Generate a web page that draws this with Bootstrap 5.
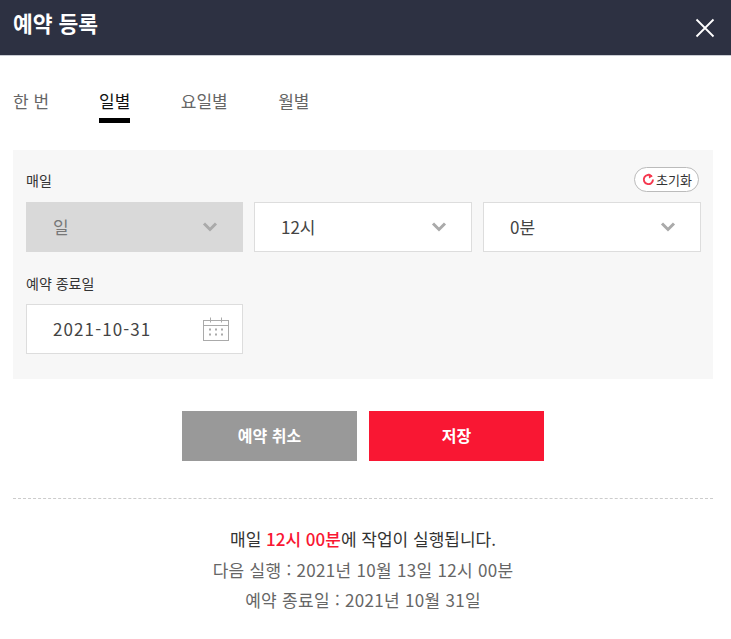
<!DOCTYPE html>
<html lang="ko"><head><meta charset="utf-8">
<link rel="stylesheet" href="https://cdn.jsdelivr.net/npm/bootstrap@5.3.0/dist/css/bootstrap.min.css">
<style>
body{font-family:"Noto Sans CJK KR","Noto Sans",sans-serif;background:#fff;color:#333;overflow:hidden}
.hdr{height:56px;background:#2d3142;border-bottom:1px solid #c9ccd3;padding:0 16px 0 13px}
.hdr-title{font-size:21.5px;font-weight:700;color:#fff;line-height:1;margin:0;position:relative;top:-5px}
.x-btn{background:none;border:0;padding:0;width:20px;height:20px;display:block;position:relative;top:-4px}
.tabs-row{padding:33px 13px 0;height:94px}
.tab-i{font-size:17px;color:#666;line-height:24px;height:34px;padding:0;text-decoration:none;display:block;margin-right:50.5px;border-bottom:4px solid transparent}
.tab-i:first-child{width:35.5px;white-space:nowrap}
.tab-i.on{color:#111;border-bottom:5px solid #000;height:34px}
.panel{margin:0 18px 0 13px;background:#f7f7f7;padding:13px 12px 25px 13px;height:229px}
.lbl{font-size:14px;line-height:20px;color:#333;margin:0}
.lbl1{padding-top:2px}
.top-row{height:39px;padding-top:5px}
.reset{font-size:13px;line-height:1;color:#333;background:#fff;border:1px solid #bbb;border-radius:13px;height:25px;padding:0 6px 0 7px;gap:1px;margin:0 2px 0 0;position:relative;top:-1px}
.sel-row{gap:11px}
.sel{flex:1 1 0;height:50px;background:#fff;border:1px solid #ddd;font-size:17px;color:#444;padding:0 24px 0 26px}
.sel.off{background:#d9d9d9;border-color:#d9d9d9;color:#777;flex:none;width:217px}
.field-w{width:217px;flex:none;padding-right:13px}
.num{letter-spacing:1.1px}
.lbl2{margin:21px 0 11px}
.acts{gap:12px;margin:32px 18px 0 13px}
.act{width:175px;height:50px;border:0;border-radius:0;font-size:16px;font-weight:700;color:#fff;padding:0 0 3px}
.act.gray{background:#999}
.act.red{background:#f91733}
.act.gray:hover{background:#999;color:#fff}
.act.red:hover{background:#f91733;color:#fff}
.dash{margin:37px 18px 0 13px;border-top:1px dashed #ccc}
.info{text-align:center;margin:25px 18px 0 13px;font-size:17px;line-height:30.5px;color:#666}
.info .main{color:#333}
.info .sub{letter-spacing:.3px}
.info b{color:#f91733;font-weight:500}
</style></head><body>
<div class="hdr d-flex align-items-center justify-content-between">
<h1 class="hdr-title">예약 등록</h1>
<button class="x-btn" aria-label="닫기"><svg width="20" height="20" viewBox="0 0 20 20"><path d="M1.5 1.5 18.5 18.5M18.5 1.5 1.5 18.5" stroke="#fff" stroke-width="1.8" fill="none"/></svg></button>
</div>
<div class="tabs-row d-flex align-items-start">
<a class="tab-i" href="#">한 번</a><a class="tab-i on" href="#">일별</a><a class="tab-i" href="#">요일별</a><a class="tab-i" href="#">월별</a>
</div>
<div class="panel">
<div class="top-row d-flex justify-content-between align-items-start">
<p class="lbl lbl1">매일</p>
<button class="reset d-flex align-items-center"><svg width="13" height="13" viewBox="0 0 13 13"><path d="M9.6 3.2A4.6 4.6 0 1 0 11 6.5" stroke="#f5384f" stroke-width="1.9" fill="none"/><path d="M6.6 .3 10.8 3.2 7 5.6Z" fill="#f5384f"/></svg>초기화</button>
</div>
<div class="sel-row d-flex">
<div class="sel off d-flex align-items-center justify-content-between"><span>일</span><svg width="16" height="10" viewBox="0 0 16 10"><path d="M2 1.5 8 7.5 14 1.5" stroke="#aaa" stroke-width="3" fill="none"/></svg></div>
<div class="sel d-flex align-items-center justify-content-between"><span>12시</span><svg width="16" height="10" viewBox="0 0 16 10"><path d="M2 1.5 8 7.5 14 1.5" stroke="#aaa" stroke-width="3" fill="none"/></svg></div>
<div class="sel d-flex align-items-center justify-content-between"><span>0분</span><svg width="16" height="10" viewBox="0 0 16 10"><path d="M2 1.5 8 7.5 14 1.5" stroke="#aaa" stroke-width="3" fill="none"/></svg></div>
</div>
<p class="lbl lbl2">예약 종료일</p>
<div class="sel field-w d-flex align-items-center justify-content-between"><span class="num">2021-10-31</span>
<svg width="26" height="24" viewBox="0 0 26 24" fill="none" stroke="#aaa"><rect x=".5" y="3.5" width="25" height="20"/><path d="M.5 8.5H25.5M7.5 .5V5.5M18.5 .5V5.5"/><path d="M6 12.5h2M12 12.5h2M18 12.5h2M6 17.5h2M12 17.5h2M18 17.5h2" stroke-width="2"/></svg></div>
</div>
<div class="acts d-flex justify-content-center">
<button class="btn act gray">예약 취소</button><button class="btn act red">저장</button>
</div>
<div class="dash"></div>
<div class="info">
<div class="main">매일 <b>12시 00분</b>에 작업이 실행됩니다.</div>
<div class="sub">다음 실행 : 2021년 10월 13일 12시 00분</div>
<div class="sub">예약 종료일 : 2021년 10월 31일</div>
</div>
</body></html>
